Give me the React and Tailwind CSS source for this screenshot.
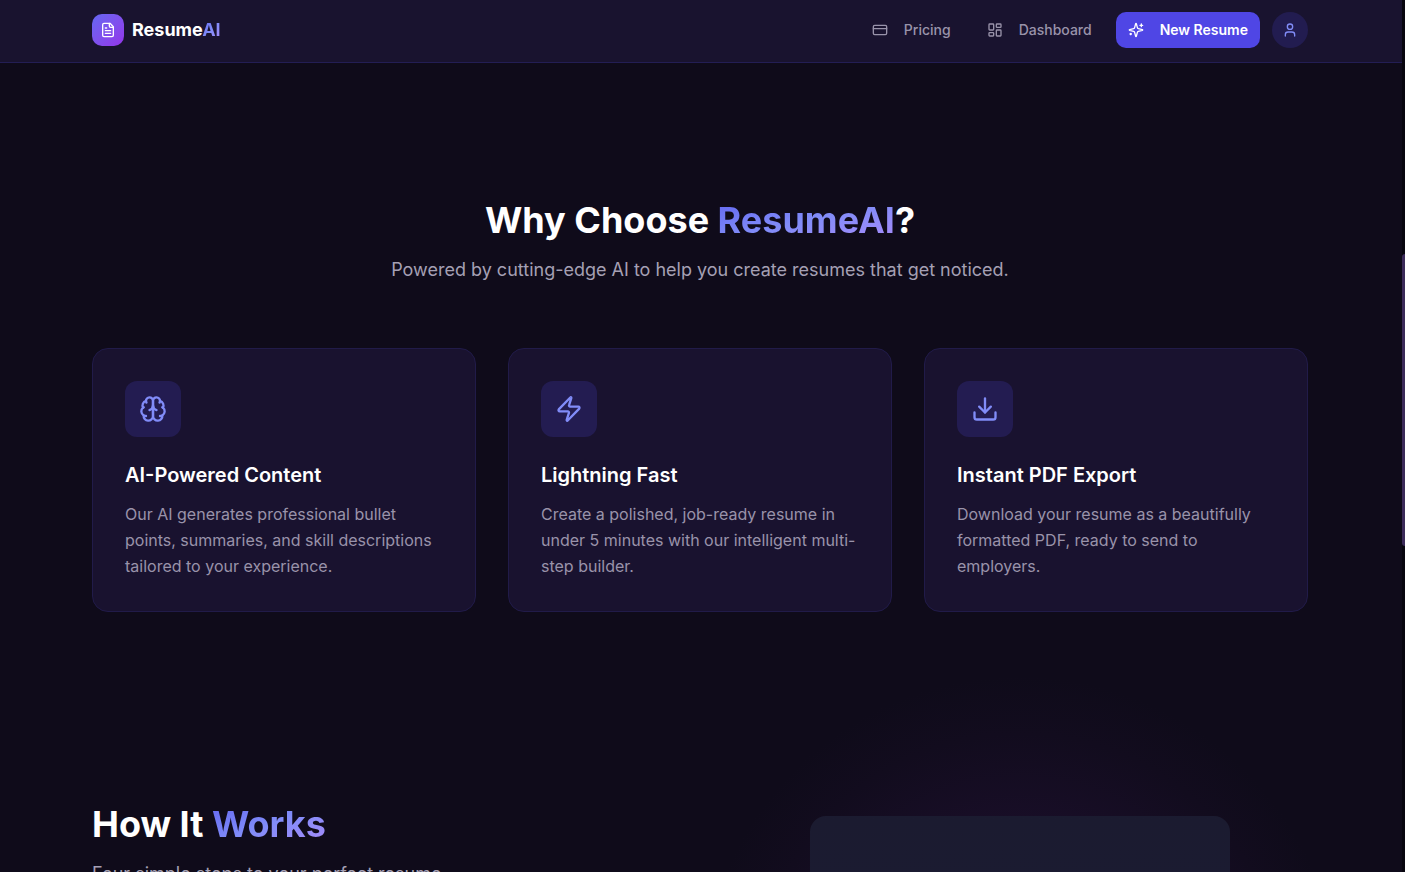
import React from "react";
import { CreditCard, LayoutDashboard, User, Zap, Download } from "lucide-react";

function LineIcon({ size, paths }) {
  return (
    <svg
      width={size}
      height={size}
      viewBox="0 0 24 24"
      fill="none"
      stroke="currentColor"
      strokeWidth="2"
      strokeLinecap="round"
      strokeLinejoin="round"
      aria-hidden="true"
      className="shrink-0"
    >
      {paths.map((d) => (
        <path key={d} d={d} />
      ))}
    </svg>
  );
}

const sparklesPaths = [
  "M9.937 15.5A2 2 0 0 0 8.5 14.063l-6.135-1.582a.5.5 0 0 1 0-.962L8.5 9.936A2 2 0 0 0 9.937 8.5l1.582-6.135a.5.5 0 0 1 .963 0L14.063 8.5A2 2 0 0 0 15.5 9.937l6.135 1.581a.5.5 0 0 1 0 .964L15.5 14.063a2 2 0 0 0-1.437 1.437l-1.582 6.135a.5.5 0 0 1-.963 0z",
  "M20 3v4",
  "M22 5h-4",
  "M4 17v2",
  "M5 18H3",
];

const brainPaths = [
  "M12 5a3 3 0 1 0-5.997.125 4 4 0 0 0-2.526 5.77 4 4 0 0 0 .556 6.588A4 4 0 1 0 12 18Z",
  "M12 5a3 3 0 1 1 5.997.125 4 4 0 0 1 2.526 5.77 4 4 0 0 1-.556 6.588A4 4 0 1 1 12 18Z",
  "M15 13a4.5 4.5 0 0 1-3-4 4.5 4.5 0 0 1-3 4",
  "M17.599 6.5a3 3 0 0 0 .399-1.375",
  "M6.003 5.125A3 3 0 0 0 6.401 6.5",
  "M3.477 10.896a4 4 0 0 1 .585-.396",
  "M19.938 10.5a4 4 0 0 1 .585.396",
  "M6 18a4 4 0 0 1-1.967-.516",
  "M19.967 17.484A4 4 0 0 1 18 18",
];

const documentPaths = [
  "M15 2H6a2 2 0 0 0-2 2v16a2 2 0 0 0 2 2h12a2 2 0 0 0 2-2V7Z",
  "M14 2v4a2 2 0 0 0 2 2h4",
  "M10 9H8",
  "M16 13H8",
  "M16 17H8",
];

const Sparkles = ({ size }) => <LineIcon size={size} paths={sparklesPaths} />;
const Brain = ({ size }) => <LineIcon size={size} paths={brainPaths} />;
const Document = ({ size }) => <LineIcon size={size} paths={documentPaths} />;

const features = [
  {
    icon: Brain,
    title: "AI-Powered Content",
    text: "Our AI generates professional bullet points, summaries, and skill descriptions tailored to your experience.",
  },
  {
    icon: Zap,
    title: "Lightning Fast",
    text: "Create a polished, job-ready resume in under 5 minutes with our intelligent multi-step builder.",
  },
  {
    icon: Download,
    title: "Instant PDF Export",
    text: "Download your resume as a beautifully formatted PDF, ready to send to employers.",
  },
];

function GradientText({ children }) {
  return (
    <span className="bg-linear-to-br from-[#6366f1] via-[#818cf8] to-[#a78bfa] bg-clip-text text-transparent">
      {children}
    </span>
  );
}

function NavLink({ icon: Icon, children }) {
  return (
    <a href="#" className="flex h-9 items-center gap-4 px-3 text-sm font-medium text-[#9993aa]">
      <Icon size={16} />
      {children}
    </a>
  );
}

function Header() {
  return (
    <header className="border-b border-[#231e54] bg-[#19132f] pr-0.5">
      <div className="mx-auto flex max-w-7xl items-center justify-between px-8 pt-3 pb-3.5">
        <a href="#" className="flex items-center gap-2">
          <span className="flex size-8 items-center justify-center rounded-[10px] bg-linear-to-br from-[#6366f1] to-[#9333ea] text-white">
            <Document size={16} />
          </span>
          <span className="text-lg font-bold text-white">
            Resume<GradientText>AI</GradientText>
          </span>
        </a>
        <nav className="flex items-center gap-3">
          <NavLink icon={CreditCard}>Pricing</NavLink>
          <NavLink icon={LayoutDashboard}>Dashboard</NavLink>
          <button className="flex h-9 items-center gap-4 rounded-[10px] bg-[#4f46e5] px-3 text-sm font-semibold text-white">
            <Sparkles size={16} />
            New Resume
          </button>
          <button aria-label="Account" className="flex size-9 items-center justify-center rounded-full bg-[#221c50] text-[#818cf8]">
            <User size={16} />
          </button>
        </nav>
      </div>
    </header>
  );
}

function FeatureCard({ icon: Icon, title, text }) {
  return (
    <article className="rounded-2xl border border-[#211b49] bg-[#19122f] p-8">
      <div className="mb-6 flex size-14 items-center justify-center rounded-xl bg-[#231c51] text-[#818cf8]">
        <Icon size={28} />
      </div>
      <h3 className="mb-3 text-xl font-semibold text-white">{title}</h3>
      <p className="text-base leading-[26px] text-[#9993aa]">{text}</p>
    </article>
  );
}

export default function App() {
  return (
    <div className="flex h-screen overflow-hidden bg-[#0f0b1a] font-['Inter',sans-serif]">
      <div className="min-w-0 flex-1">
        <Header />
        <main className="pr-0.5">
          <section className="mx-auto max-w-7xl px-8 pt-[137px] pb-24">
            <div className="mb-16 text-center">
              <h2 className="mb-4 text-4xl font-bold text-white">
                Why Choose <GradientText>ResumeAI</GradientText>?
              </h2>
              <p className="text-lg text-[#a5a0b4]">
                Powered by cutting-edge AI to help you create resumes that get noticed.
              </p>
            </div>
            <div className="grid grid-cols-3 gap-8">
              {features.map((f) => (
                <FeatureCard key={f.title} {...f} />
              ))}
            </div>
          </section>
          <section className="mx-auto grid max-w-7xl grid-cols-2 gap-16 px-8 pt-24">
            <div>
              <h2 className="mb-4 text-4xl font-bold text-white">
                How It <GradientText>Works</GradientText>
              </h2>
              <p className="text-lg text-[#a5a0b4]">Four simple steps to your perfect resume.</p>
            </div>
            <div className="relative flex justify-center pt-3">
              <div className="absolute -top-32 left-1/2 size-[640px] -translate-x-1/2 rounded-full bg-[radial-gradient(closest-side,#210f35,#190e28_50%,#120c1e_82%,#0f0b1a)]" />
              <div className="relative h-[520px] w-full max-w-[420px] rounded-2xl bg-linear-to-b from-[#1b1b30] to-[#1b1a38]" />
            </div>
          </section>
        </main>
      </div>
      <div aria-hidden="true" className="flex w-[3px] flex-col bg-[#08060f] pt-[254px]">
        <div className="h-[292px] rounded-l-full bg-[#3b2a59]" />
      </div>
    </div>
  );
}
